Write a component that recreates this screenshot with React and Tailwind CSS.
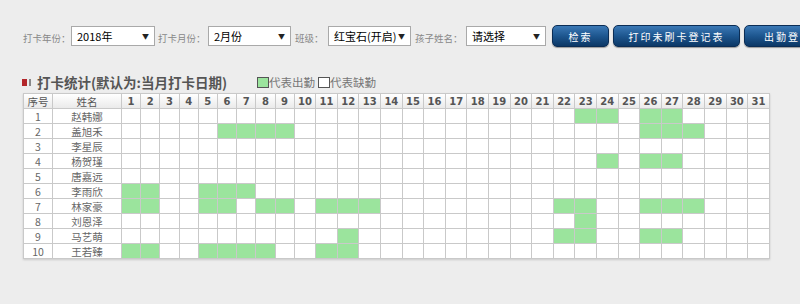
import React from "react";

const cn = '"Noto Sans CJK SC", "Noto Sans", sans-serif';
const num = '"DejaVu Sans", "Noto Sans CJK SC", sans-serif';

const students = [
  { name: "赵韩娜", days: [23, 24, 26, 27] },
  { name: "盖旭禾", days: [6, 7, 8, 9, 26, 27, 28] },
  { name: "李星辰", days: [] },
  { name: "杨贺瑾", days: [24, 26, 27] },
  { name: "唐嘉远", days: [] },
  { name: "李雨欣", days: [1, 2, 5, 6, 7] },
  { name: "林家豪", days: [1, 2, 5, 6, 8, 9, 11, 12, 13, 22, 23, 26, 27, 28] },
  { name: "刘恩泽", days: [23] },
  { name: "马艺萌", days: [12, 22, 23, 26, 27] },
  { name: "王若臻", days: [1, 2, 5, 6, 7, 8, 11, 12] },
];

const days = Array.from({ length: 31 }, (_, i) => i + 1);

function FakeSelect({ value, width }) {
  return (
    <div
      className={`${width} shrink-0 h-[20px] bg-white border border-[#a9a9a9] flex items-center justify-between pl-[5px] pr-[5px] text-[11px] text-black`}
      style={{ fontFamily: cn }}
    >
      <span>{value}</span>
      <span className="text-[7px] text-[#222]">▼</span>
    </div>
  );
}

function Label({ children }) {
  return (
    <span className="text-[9.5px] text-[#888] whitespace-nowrap" style={{ fontFamily: cn }}>
      {children}
    </span>
  );
}

function BlueButton({ children, width }) {
  return (
    <button
      className={`${width} shrink-0 h-[22px] rounded-[5px] border border-[#0b2d55] bg-gradient-to-b from-[#3b79b6] via-[#1d568f] to-[#0c3866] text-white text-[10px] tracking-[2px] shadow-[0_1px_1px_rgba(0,0,0,0.35)]`}
      style={{ fontFamily: cn }}
    >
      {children}
    </button>
  );
}

function App() {
  return (
    <div className="w-[800px] h-[304px] overflow-hidden bg-[#ededed]">

      {/* -------------------- FILTERS -------------------- */}
      <div className="flex items-center pl-[23px] pt-[24px] whitespace-nowrap">
        <div className="w-[48px] shrink-0"><Label>打卡年份：</Label></div>
        <FakeSelect value="2018年" width="w-[84px]" />
        <div className="ml-[3px] w-[50px] shrink-0"><Label>打卡月份：</Label></div>
        <FakeSelect value="2月份" width="w-[83px]" />
        <div className="ml-[4px] w-[33px] shrink-0"><Label>班级：</Label></div>
        <FakeSelect value="红宝石(开启)" width="w-[83px]" />
        <div className="ml-[4px] w-[51px] shrink-0"><Label>孩子姓名：</Label></div>
        <FakeSelect value="请选择" width="w-[80px]" />
        <div className="ml-[6px] flex gap-[4px]">
          <BlueButton width="w-[57px]">检索</BlueButton>
          <BlueButton width="w-[127px]">打印未刷卡登记表</BlueButton>
          <BlueButton width="w-[100px]">出勤登记表</BlueButton>
        </div>
      </div>

      {/* -------------------- TITLE -------------------- */}
      <div className="flex items-center pl-[22px] mt-[27px] h-[14px]">
        <div className="flex items-center gap-[2px] mr-[6px]">
          <span className="w-[5px] h-[7px] bg-[#b3262a]" />
          <span className="w-[2px] h-[7px] bg-[#888]" />
        </div>
        <span className="text-[13.5px] leading-[14px] font-bold text-[#555]" style={{ fontFamily: cn }}>
          打卡统计(默认为:当月打卡日期)
        </span>
        <div className="flex items-end ml-[30px] text-[11.5px] leading-[12px] text-[#777]" style={{ fontFamily: cn }}>
          <span className="w-[12px] h-[11px] bg-[#9be49d] border border-[#555]" />
          <span>代表出勤</span>
          <span className="w-[12px] h-[11px] bg-white border border-[#555] ml-[3px]" />
          <span>代表缺勤</span>
        </div>
      </div>

      {/* -------------------- TABLE -------------------- */}
      <div className="pl-[23px] mt-[4px]">
        <table
          className="table-fixed border-collapse w-[746px] bg-white shadow-[0_1px_2px_rgba(0,0,0,0.15)]"
          style={{ fontFamily: cn }}
        >
          <colgroup>
            <col className="w-[29px]" />
            <col className="w-[69px]" />
            {days.map((d) => (
              <col key={d} className={d < 10 ? "w-[19.2px]" : "w-[21.6px]"} />
            ))}
          </colgroup>
          <thead>
            <tr className="h-[15px] bg-gradient-to-b from-white to-[#e9e9e9]">
              <th className="border border-[#c9c9c9] p-0 text-[10.5px] leading-[13px] font-normal text-[#555]">序号</th>
              <th className="border border-[#c9c9c9] p-0 text-[10.5px] leading-[13px] font-normal text-[#555]">姓名</th>
              {days.map((d) => (
                <th
                  key={d}
                  className="border border-[#c9c9c9] p-0 text-[10px] leading-[13px] font-bold text-[#555]"
                  style={{ fontFamily: num }}
                >
                  {d}
                </th>
              ))}
            </tr>
          </thead>
          <tbody>
            {students.map((s, i) => (
              <tr key={s.name} className="h-[15px]">
                <td className="border border-[#c9c9c9] p-0 text-center text-[10.5px] leading-[13px] text-[#666]">{i + 1}</td>
                <td className="border border-[#c9c9c9] p-0 text-center text-[10.5px] leading-[13px] text-[#666]">{s.name}</td>
                {days.map((d) => (
                  <td
                    key={d}
                    className={`border border-[#c9c9c9] p-0 ${s.days.includes(d) ? "bg-[#9be49d]" : "bg-white"}`}
                  />
                ))}
              </tr>
            ))}
          </tbody>
        </table>
      </div>
    </div>
  );
}

export default App;
